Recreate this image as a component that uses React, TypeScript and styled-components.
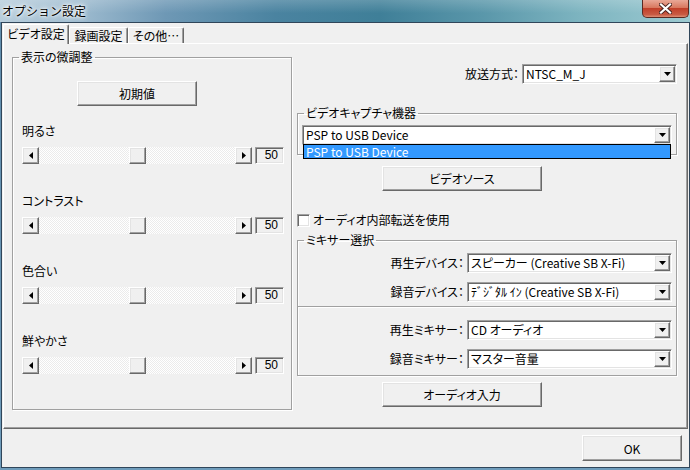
import React from 'react';
import styled, { createGlobalStyle, css } from 'styled-components';

const GlobalStyle = createGlobalStyle`
  html, body {
    margin: 0;
    padding: 0;
    background: #f0f0f0;
  }
  body {
    font-family: "Noto Sans CJK JP", "Noto Sans", sans-serif;
    font-size: 12px;
    color: #000;
    font-feature-settings: "palt";
  }
`;

const raised = css`
  border: 1px solid;
  border-color: #fff #696969 #696969 #fff;
  box-shadow: inset -1px -1px #a0a0a0, inset 1px 1px #e3e3e3;
`;

const sunken = css`
  border: 1px solid;
  border-color: #a0a0a0 #fff #fff #a0a0a0;
  box-shadow: inset 1px 1px #696969, inset -1px -1px #e3e3e3;
`;

const Window = styled.div`
  width: 690px;
  height: 470px;
  display: flex;
  flex-direction: column;
  background: linear-gradient(#5f8cac, #6f9cbb);
  overflow: hidden;
`;

const TitleBar = styled.div`
  height: 22px;
  flex-shrink: 0;
  display: flex;
  justify-content: space-between;
  align-items: flex-start;
  background:
    linear-gradient(rgba(255, 255, 255, 0.18), rgba(255, 255, 255, 0) 60%),
    linear-gradient(90deg, #b7cddc 0%, #a3bfd2 10%, #6e98b5 24%, #4a83a0 40%, #3f7f98 55%, #5a97aa 70%, #7db4c0 84%, #9ccad1 100%);
`;

const TitleText = styled.span`
  margin: 3px 0 0 2px;
  font-size: 12px;
  line-height: 16px;
  font-feature-settings: normal;
  text-shadow: 0 0 6px #fff, 0 0 4px #fff, 0 0 2px #fff;
`;

const CloseButton = styled.div`
  width: 47px;
  height: 18px;
  box-sizing: border-box;
  margin-right: 1px;
  border: 1px solid #5a2a22;
  border-top: none;
  border-radius: 0 0 5px 5px;
  background: linear-gradient(#e9a897 0%, #d8785f 45%, #c1402a 50%, #c85a43 85%, #de8e74 100%);
  display: flex;
  align-items: center;
  justify-content: center;
`;

const Client = styled.div`
  flex: 1;
  min-height: 0;
  margin: 0 0 2px 1px;
  border: 1px solid #30465a;
  background: #f0f0f0;
  display: flex;
  flex-direction: column;
`;

const TabStrip = styled.div`
  height: 20px;
  flex-shrink: 0;
  display: flex;
  align-items: flex-end;
  padding-left: 1px;
  position: relative;
  z-index: 1;
`;

const Tab = styled.div<{ $active?: boolean; $width: number }>`
  box-sizing: border-box;
  width: ${(p) => p.$width}px;
  height: ${(p) => (p.$active ? 20 : 16)}px;
  margin-bottom: ${(p) => (p.$active ? -1 : 0)}px;
  border-left: 1px solid #fff;
  border-top: 1px solid #fff;
  border-right: 1px solid #696969;
  box-shadow: inset -1px 0 #a0a0a0;
  border-radius: 2px 2px 0 0;
  background: #f0f0f0;
  display: flex;
  align-items: center;
  justify-content: center;
  padding-bottom: ${(p) => (p.$active ? 2 : 0)}px;
  line-height: 14px;
`;

const TabPage = styled.div`
  flex: 1;
  min-height: 0;
  margin: 0 1px;
  box-sizing: border-box;
  border: 1px solid;
  border-color: #fff #696969 #696969 #fff;
  box-shadow: inset -1px -1px #a0a0a0;
  display: flex;
  align-items: flex-start;
  padding: 6px 10px 0 8px;
`;

const Group = styled.fieldset<{ $width: number; $height?: number }>`
  margin: 0;
  padding: 0;
  min-width: 0;
  box-sizing: border-box;
  width: ${(p) => p.$width}px;
  ${(p) => (p.$height ? `height: ${p.$height}px;` : '')}
  border: 1px solid #a0a0a0;
  box-shadow: 1px 1px #fff, inset 1px 1px #fff;
`;

const Legend = styled.legend`
  margin-left: 6px;
  padding: 0 2px;
  line-height: 14px;
  font-size: 12px;
`;

const AdjustBody = styled.div`
  padding: 17px 0 0 9px;
  display: flex;
  flex-direction: column;
`;

const Button = styled.button<{ $width: number; $height?: number; $indent?: number }>`
  box-sizing: border-box;
  width: ${(p) => p.$width}px;
  height: ${(p) => p.$height ?? 25}px;
  margin-left: ${(p) => p.$indent ?? 0}px;
  padding: 0;
  ${raised};
  background: #f0f0f0;
  font: inherit;
  font-size: 12px;
  color: #000;
  flex-shrink: 0;
`;

const SliderBlock = styled.div<{ $gap: number }>`
  margin-top: ${(p) => p.$gap}px;
  display: flex;
  flex-direction: column;
  gap: 9px;
`;

const FieldLabel = styled.span`
  line-height: 14px;
  height: 14px;
`;

const Slider = styled.div`
  display: flex;
  height: 17px;
`;

const ScrollBar = styled.div`
  width: 230px;
  display: flex;
`;

const ScrollArrow = styled.div`
  width: 17px;
  box-sizing: border-box;
  ${raised};
  background: #f0f0f0;
  display: flex;
  align-items: center;
  justify-content: center;
`;

const Track = styled.div`
  flex: 1;
  display: flex;
  background: repeating-conic-gradient(#ffffff 0 25%, #ebebeb 0 50%) 0 0 / 2px 2px;
`;

const TrackPart = styled.div`
  flex-basis: 0;
`;

const Thumb = styled.div`
  width: 17px;
  box-sizing: border-box;
  ${raised};
  background: #f0f0f0;
`;

const ValueBox = styled.div`
  width: 29px;
  margin-left: 3px;
  box-sizing: border-box;
  ${sunken};
  background: #f0f0f0;
  text-align: right;
  padding-right: 5px;
  line-height: 15px;
  font-family: "Liberation Sans", sans-serif;
`;

const RightColumn = styled.div`
  width: 380px;
  margin-left: 5px;
  display: flex;
  flex-direction: column;
`;

const LabeledRow = styled.div<{ $top: number; $inset?: number }>`
  margin-top: ${(p) => p.$top}px;
  padding-right: ${(p) => p.$inset ?? 0}px;
  display: flex;
  justify-content: flex-end;
  align-items: center;
  gap: 3px;
  line-height: 16px;
`;

const Combo = styled.div<{ $width: number }>`
  position: relative;
  box-sizing: border-box;
  width: ${(p) => p.$width}px;
  height: 20px;
  padding: 1px;
  ${sunken};
  background: #fff;
  display: flex;
  align-items: center;
`;

const ComboText = styled.span`
  flex: 1;
  min-width: 0;
  padding-left: 2px;
  white-space: nowrap;
  line-height: 16px;
`;

const DropButton = styled.span`
  width: 16px;
  height: 16px;
  flex-shrink: 0;
  box-sizing: border-box;
  ${raised};
  background: #f0f0f0;
  display: flex;
  align-items: center;
  justify-content: center;
`;

const DropList = styled.div`
  position: absolute;
  top: 100%;
  left: 0;
  right: 0;
  height: 15px;
  box-sizing: border-box;
  border: 1px solid #000;
  background: #3399ff;
  color: #fff;
  line-height: 13px;
  padding-left: 2px;
  white-space: nowrap;
`;

const CaptureBody = styled.div`
  padding: 5px 4px 9px 4px;
`;

const CheckRow = styled.label`
  margin-top: 22px;
  height: 14px;
  display: flex;
  align-items: center;
  gap: 3px;
  line-height: 16px;
`;

const CheckBox = styled.span`
  width: 13px;
  height: 13px;
  box-sizing: border-box;
  ${sunken};
  background: #fff;
`;

const MixerBody = styled.div`
  padding: 0 0 6px 0;
`;

const Divider = styled.div`
  margin: 4px 0 0 0;
  border-top: 1px solid #a0a0a0;
  border-bottom: 1px solid #fff;
`;

const Footer = styled.div`
  height: 38px;
  flex-shrink: 0;
  box-sizing: border-box;
  display: flex;
  justify-content: flex-end;
  align-items: flex-start;
  padding: 6px 7px 0 0;
`;

const Arrow = ({ dir }: { dir: 'left' | 'right' | 'down' }) => {
  if (dir === 'down') {
    return (
      <svg width="7" height="4" viewBox="0 0 7 4">
        <polygon points="0,0 7,0 3.5,4" fill="#000" />
      </svg>
    );
  }
  return (
    <svg width="4" height="7" viewBox="0 0 4 7">
      <polygon points={dir === 'left' ? '4,0 4,7 0,3.5' : '0,0 0,7 4,3.5'} fill="#000" />
    </svg>
  );
};

const AdjustSlider = ({ label, value, gap }: { label: string; value: number; gap: number }) => (
  <SliderBlock $gap={gap}>
    <FieldLabel>{label}</FieldLabel>
    <Slider>
      <ScrollBar>
        <ScrollArrow>
          <Arrow dir="left" />
        </ScrollArrow>
        <Track>
          <TrackPart style={{ flexGrow: value }} />
          <Thumb />
          <TrackPart style={{ flexGrow: 100 - value }} />
        </Track>
        <ScrollArrow>
          <Arrow dir="right" />
        </ScrollArrow>
      </ScrollBar>
      <ValueBox>{value}</ValueBox>
    </Slider>
  </SliderBlock>
);

const ComboBox = ({ width, text, children }: { width: number; text: string; children?: React.ReactNode }) => (
  <Combo $width={width}>
    <ComboText>{text}</ComboText>
    <DropButton>
      <Arrow dir="down" />
    </DropButton>
    {children}
  </Combo>
);

const mixerRows = [
  { label: '再生デバイス：', value: 'スピーカー (Creative SB X-Fi)', top: 6 },
  { label: '録音デバイス：', value: 'ﾃﾞｼﾞﾀﾙ ｲﾝ (Creative SB X-Fi)', top: 9 },
];

const mixerRows2 = [
  { label: '再生ミキサー：', value: 'CD オーディオ', top: 12 },
  { label: '録音ミキサー：', value: 'マスター音量', top: 9 },
];

export default function App() {
  return (
    <>
      <GlobalStyle />
      <Window>
        <TitleBar>
          <TitleText>オプション設定</TitleText>
          <CloseButton>
            <svg width="13" height="11" viewBox="0 0 13 11">
              <path d="M2 1.5 L11 9.5 M11 1.5 L2 9.5" stroke="#4a2420" strokeWidth="4" strokeLinecap="square" />
              <path d="M2 1.5 L11 9.5 M11 1.5 L2 9.5" stroke="#fff" strokeWidth="2.2" strokeLinecap="square" />
            </svg>
          </CloseButton>
        </TitleBar>
        <Client>
          <TabStrip>
            <Tab $active $width={66}>ビデオ設定</Tab>
            <Tab $width={59}>録画設定</Tab>
            <Tab $width={56}>その他…</Tab>
          </TabStrip>
          <TabPage>
            <Group $width={280} $height={360}>
              <Legend>表示の微調整</Legend>
              <AdjustBody>
                <Button $width={120} $indent={55}>初期値</Button>
                <AdjustSlider label="明るさ" value={50} gap={18} />
                <AdjustSlider label="コントラスト" value={50} gap={30} />
                <AdjustSlider label="色合い" value={50} gap={30} />
                <AdjustSlider label="鮮やかさ" value={50} gap={30} />
              </AdjustBody>
            </Group>
            <RightColumn>
              <LabeledRow $top={14}>
                <span>放送方式：</span>
                <ComboBox width={155} text="NTSC_M_J" />
              </LabeledRow>
              <Group $width={380} style={{ marginTop: 22 }}>
                <Legend>ビデオキャプチャ機器</Legend>
                <CaptureBody>
                  <ComboBox width={370} text="PSP to USB Device">
                    <DropList>PSP to USB Device</DropList>
                  </ComboBox>
                </CaptureBody>
              </Group>
              <Button $width={160} $indent={85} style={{ marginTop: 11 }}>
                ビデオソース
              </Button>
              <CheckRow>
                <CheckBox />
                <span>オーディオ内部転送を使用</span>
              </CheckRow>
              <Group $width={380} style={{ marginTop: 6 }}>
                <Legend>ミキサー選択</Legend>
                <MixerBody>
                  {mixerRows.map((r) => (
                    <LabeledRow key={r.label} $top={r.top} $inset={4}>
                      <span>{r.label}</span>
                      <ComboBox width={205} text={r.value} />
                    </LabeledRow>
                  ))}
                  <Divider />
                  {mixerRows2.map((r) => (
                    <LabeledRow key={r.label} $top={r.top} $inset={4}>
                      <span>{r.label}</span>
                      <ComboBox width={205} text={r.value} />
                    </LabeledRow>
                  ))}
                </MixerBody>
              </Group>
              <Button $width={160} $indent={85} style={{ marginTop: 6 }}>
                オーディオ入力
              </Button>
            </RightColumn>
          </TabPage>
          <Footer>
            <Button $width={100} $height={26}>OK</Button>
          </Footer>
        </Client>
      </Window>
    </>
  );
}
